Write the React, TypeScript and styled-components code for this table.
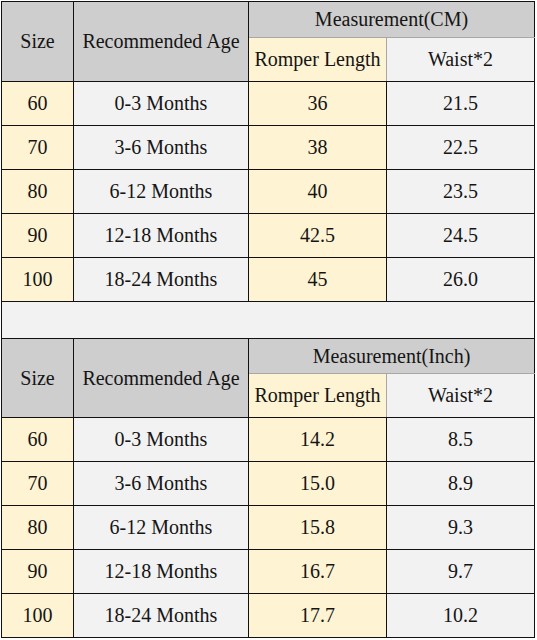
import styled, { createGlobalStyle, css } from "styled-components";

type Tone = "gray" | "yellow" | "light";

interface SizeRow {
  size: string;
  age: string;
  length: string;
  waist: string;
}

const GlobalStyle = createGlobalStyle`
  body {
    margin: 0;
    background: #fff;
  }
`;

const toneColor = (tone: Tone) =>
  tone === "gray" ? "#cecece" : tone === "yellow" ? "#fef3d2" : "#f2f2f2";

// tables may not inherit fonts (quirks mode), so cells set their own
const cellText = css`
  font-family: "Liberation Serif", "Times New Roman", serif;
  font-size: 20px;
  font-weight: normal;
  color: #151515;
  padding: 0;
  text-align: center;
  vertical-align: middle;
  white-space: nowrap;
`;

const Wrap = styled.div`
  padding: 1px 0 0 1px;
`;

const Table = styled.table`
  border-collapse: collapse;
  table-layout: fixed;
  width: 533px;
  border: 1px solid #111;
`;

const Row = styled.tr<{ $h: number }>`
  height: ${({ $h }) => $h}px;
`;

const HeadCell = styled.th<{ $tone: Tone; $softBottom?: boolean; $softRight?: boolean }>`
  ${cellText};
  background: ${({ $tone }) => toneColor($tone)};
  border: 1px solid #111;
  border-bottom-color: ${({ $softBottom }) => ($softBottom ? "#a8a8a8" : "#111")};
  border-right-color: ${({ $softRight }) => ($softRight ? "#a8a8a8" : "#111")};
`;

const Cell = styled.td<{ $tone: Tone }>`
  ${cellText};
  background: ${({ $tone }) => toneColor($tone)};
  border: 1px solid #111;
`;

const Spacer = styled.td`
  padding: 0;
  background: #f2f2f2;
  border: 1px solid #111;
`;

const cmRows: SizeRow[] = [
  { size: "60", age: "0-3 Months", length: "36", waist: "21.5" },
  { size: "70", age: "3-6 Months", length: "38", waist: "22.5" },
  { size: "80", age: "6-12 Months", length: "40", waist: "23.5" },
  { size: "90", age: "12-18 Months", length: "42.5", waist: "24.5" },
  { size: "100", age: "18-24 Months", length: "45", waist: "26.0" },
];

const inchRows: SizeRow[] = [
  { size: "60", age: "0-3 Months", length: "14.2", waist: "8.5" },
  { size: "70", age: "3-6 Months", length: "15.0", waist: "8.9" },
  { size: "80", age: "6-12 Months", length: "15.8", waist: "9.3" },
  { size: "90", age: "12-18 Months", length: "16.7", waist: "9.7" },
  { size: "100", age: "18-24 Months", length: "17.7", waist: "10.2" },
];

const HeaderRows = ({ unit, top }: { unit: string; top: number }) => (
  <>
    <Row $h={top}>
      <HeadCell $tone="gray" rowSpan={2}>
        Size
      </HeadCell>
      <HeadCell $tone="gray" rowSpan={2}>
        Recommended Age
      </HeadCell>
      <HeadCell $tone="gray" colSpan={2} $softBottom>
        Measurement({unit})
      </HeadCell>
    </Row>
    <Row $h={44}>
      <HeadCell $tone="yellow" $softRight>
        Romper Length
      </HeadCell>
      <HeadCell $tone="light">Waist*2</HeadCell>
    </Row>
  </>
);

const BodyRows = ({ rows }: { rows: SizeRow[] }) => (
  <>
    {rows.map((r) => (
      <Row $h={44} key={r.size}>
        <Cell $tone="yellow">{r.size}</Cell>
        <Cell $tone="light">{r.age}</Cell>
        <Cell $tone="yellow">{r.length}</Cell>
        <Cell $tone="light">{r.waist}</Cell>
      </Row>
    ))}
  </>
);

const App = () => {
  return (
    <Wrap>
      <GlobalStyle />
      <Table>
        <colgroup>
          <col style={{ width: 72 }} />
          <col style={{ width: 175 }} />
          <col style={{ width: 138 }} />
          <col style={{ width: 148 }} />
        </colgroup>
        <tbody>
          <HeaderRows unit="CM" top={36} />
          <BodyRows rows={cmRows} />
          <Row $h={37}>
            <Spacer colSpan={4} />
          </Row>
          <HeaderRows unit="Inch" top={35} />
          <BodyRows rows={inchRows} />
        </tbody>
      </Table>
    </Wrap>
  );
};

export default App;
